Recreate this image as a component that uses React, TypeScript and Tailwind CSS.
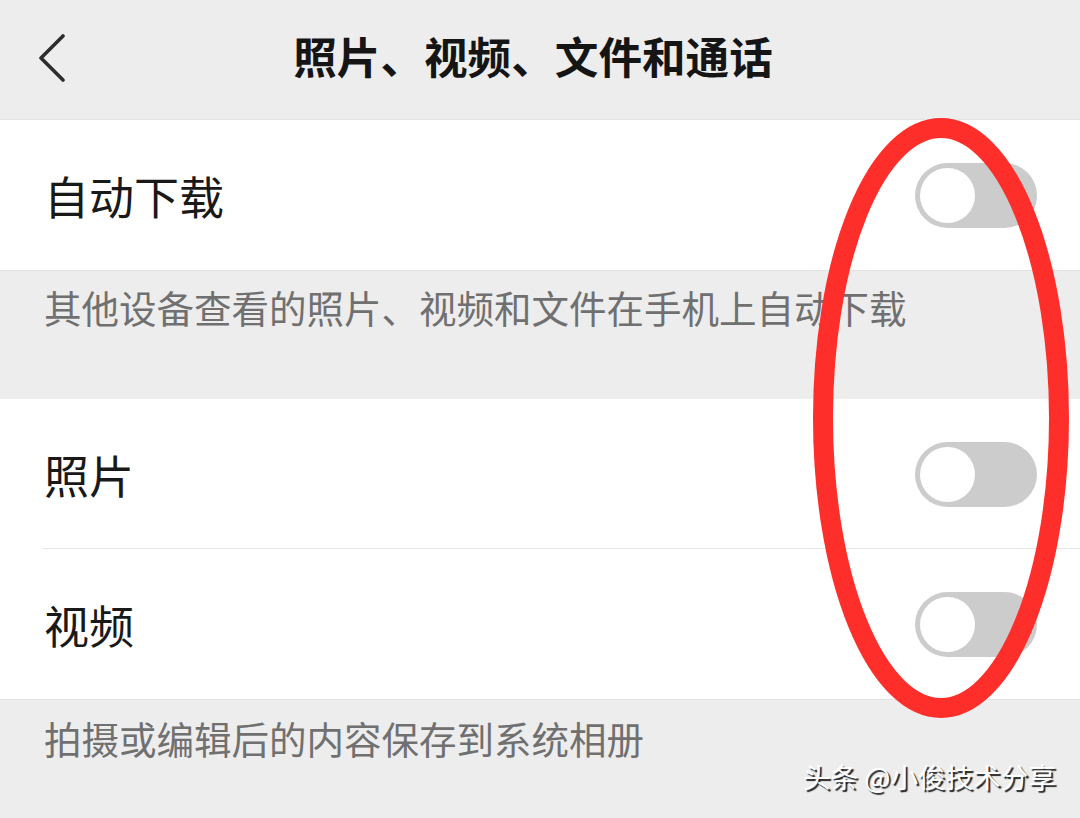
import React from "react";

const font = { fontFamily: '"Noto Sans CJK SC", "Noto Sans", sans-serif' };

function Toggle() {
  return (
    <div className="flex h-[65px] w-[122px] items-center rounded-full bg-[#cccccc] pl-[5px]">
      <div className="h-[55px] w-[55px] rounded-full bg-white" />
    </div>
  );
}

function Row({ label, divider }: { label: string; divider?: boolean }) {
  return (
    <div className="relative flex h-[150px] items-center justify-between bg-white pl-[44px] pr-[43px]">
      <span className="text-[45px] leading-none text-[#191919]">{label}</span>
      <Toggle />
      {divider && <div className="absolute bottom-0 left-[42px] right-0 h-px bg-[#e6e6e6]" />}
    </div>
  );
}

export default function App() {
  return (
    <div className="relative h-[818px] w-[1080px] overflow-hidden bg-[#ededed]" style={font}>
      <div className="flex h-[120px] items-center border-b border-[#e4e4e4] bg-[#ededed] pb-[8px]">
        <div className="flex w-[100px] items-center pl-[38px] pt-[4px]">
          <svg width="28" height="48" viewBox="0 0 28 48" fill="none">
            <path d="M25 2 L3 24 L25 46" stroke="#2e2e2e" strokeWidth="3.6" strokeLinecap="round" strokeLinejoin="round" />
          </svg>
        </div>
        <div className="flex-1 text-center text-[43.6px] font-bold leading-none text-[#151515]">
          照片、视频、文件和通话
        </div>
        <div className="w-[114px]" />
      </div>

      <Row label="自动下载" />

      <div className="h-[129px] border-t border-[#e2e2e2] pl-[44px]">
        <div className="flex h-[72px] items-center text-[37.5px] leading-none text-[#707070]">
          其他设备查看的照片、视频和文件在手机上自动下载
        </div>
      </div>

      <Row label="照片" divider />
      <Row label="视频" />

      <div className="border-t border-[#e2e2e2] pl-[44px]">
        <div className="flex h-[76px] items-center text-[37.5px] leading-none text-[#707070]">
          拍摄或编辑后的内容保存到系统相册
        </div>
      </div>

      <svg className="pointer-events-none absolute left-0 top-0" width="1080" height="818" viewBox="0 0 1080 818">
        <ellipse cx="941" cy="418" rx="118" ry="290" fill="none" stroke="#fe2f2a" strokeWidth="20" />
      </svg>

      <div className="absolute left-[803px] top-[763px] text-[27.6px] leading-none text-white [text-shadow:2px_2px_1px_rgba(0,0,0,0.85)]">
        头条 @小俊技术分享
      </div>
    </div>
  );
}
